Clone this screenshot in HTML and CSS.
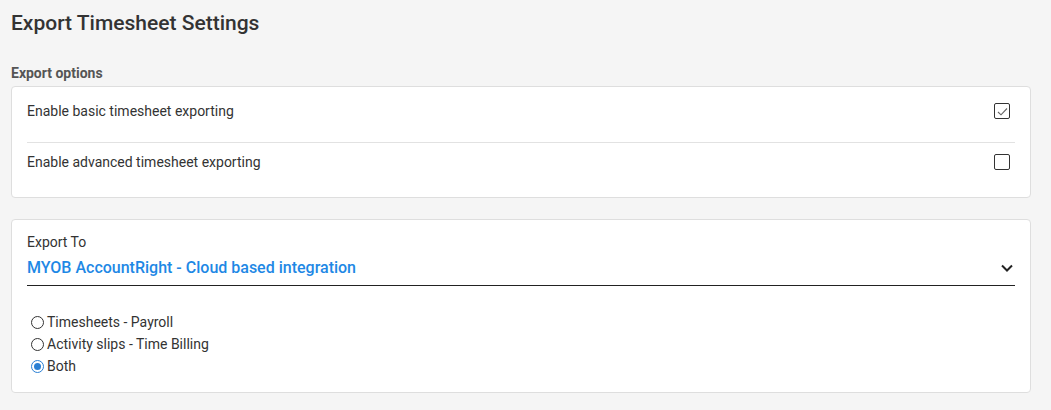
FILE: index.html
```html
<!DOCTYPE html>
<html>
<head>
<meta charset="utf-8">
<link rel="stylesheet" href="styles.css">
</head>
<body>
<div class="page">
  <h1 class="title">Export Timesheet Settings</h1>
  <div class="section-label">Export options</div>
  <div class="card options">
    <div class="opt-row first">
      <span>Enable basic timesheet exporting</span>
      <span class="checkbox">
        <svg width="13" height="13" viewBox="0 0 13 13"><path d="M2 7 L5 9.8 L11 3.5" fill="none" stroke="#666" stroke-width="1.1"/></svg>
      </span>
    </div>
    <div class="opt-row second">
      <span>Enable advanced timesheet exporting</span>
      <span class="checkbox"></span>
    </div>
  </div>
  <div class="card export">
    <div class="field-label">Export To</div>
    <div class="select">
      <span class="select-value">MYOB AccountRight - Cloud based integration</span>
      <svg class="chevron" width="14" height="10" viewBox="0 0 14 10"><path d="M2 2.5 L7 7.5 L12 2.5" fill="none" stroke="#222" stroke-width="2"/></svg>
    </div>
    <div class="radios">
      <label class="radio"><span class="dot"></span>Timesheets - Payroll</label>
      <label class="radio"><span class="dot"></span>Activity slips - Time Billing</label>
      <label class="radio"><span class="dot on"></span>Both</label>
    </div>
  </div>
</div>
</body>
</html>
```
FILE: styles.css
```css
html, body {
  margin: 0;
  padding: 0;
  background: #f5f5f5;
  font-family: Roboto, "Liberation Sans", sans-serif;
  color: #333;
}
.page {
  padding: 9px 20px 0 11px;
}
.title {
  margin: 0;
  font-size: 21px;
  font-weight: 500;
  color: #333;
  line-height: 28px;
}
.section-label {
  margin-top: 28px;
  font-size: 14px;
  font-weight: 700;
  color: #555;
  line-height: 16px;
}
.card {
  background: #fff;
  border: 1px solid #dedede;
  border-radius: 4px;
}
.options {
  margin-top: 5px;
  padding: 14px 15px 25px;
}
.opt-row {
  display: flex;
  justify-content: space-between;
  align-items: center;
  height: 20px;
  font-size: 14px;
  color: #333;
  padding-right: 5px;
}
.opt-row.first {
  padding-bottom: 21px;
}
.opt-row.second {
  border-top: 1px solid #e2e2e2;
  padding-top: 9px;
}
.checkbox {
  box-sizing: border-box;
  width: 16px;
  height: 16px;
  border: 1.5px solid #333;
  border-radius: 2px;
  display: flex;
  align-items: center;
  justify-content: center;
}
.export {
  margin-top: 21px;
  padding: 14px 15px 15px;
}
.field-label {
  font-size: 14px;
  color: #333;
  line-height: 16px;
}
.select {
  display: flex;
  justify-content: space-between;
  align-items: center;
  height: 35px;
  border-bottom: 1px solid #222;
}
.select-value {
  font-size: 16px;
  font-weight: 500;
  color: #1e88e5;
  line-height: 20px;
}
.chevron {
  margin-right: 1px;
}
.radios {
  margin-top: 25px;
  display: flex;
  flex-direction: column;
  padding-left: 4px;
}
.radio {
  display: flex;
  align-items: center;
  height: 22px;
  font-size: 14px;
  color: #333;
  gap: 3px;
}
.dot {
  box-sizing: border-box;
  width: 13px;
  height: 13px;
  border: 1px solid #333;
  border-radius: 50%;
  display: inline-block;
  position: relative;
}
.dot.on {
  border-color: #2a7fd4;
}
.dot.on::after {
  content: "";
  position: absolute;
  left: 2px;
  top: 2px;
  width: 7px;
  height: 7px;
  border-radius: 50%;
  background: #2a7fd4;
}
```
